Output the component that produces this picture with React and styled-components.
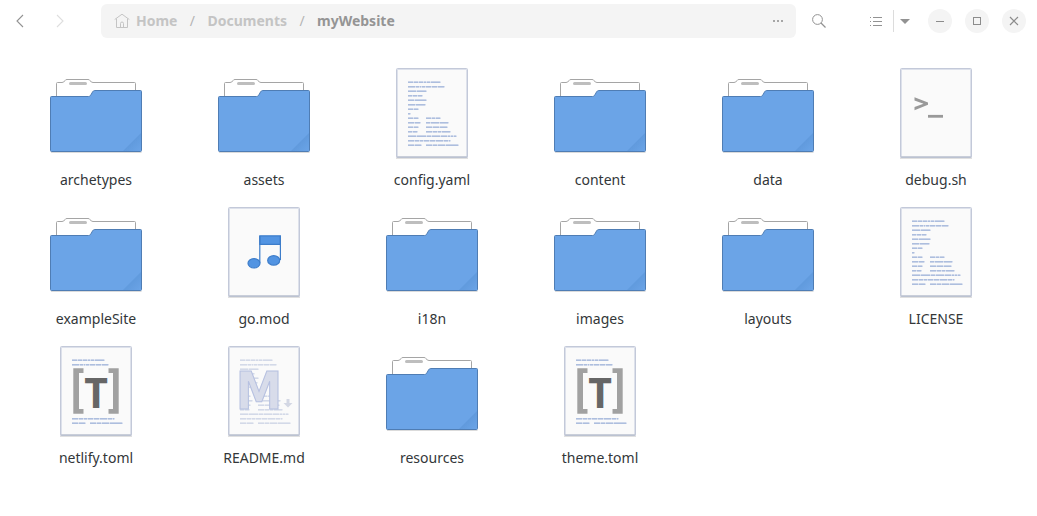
import React from "react";
import styled, { createGlobalStyle } from "styled-components";

const GlobalStyle = createGlobalStyle`
  * { box-sizing: border-box; }
  body {
    margin: 0;
    background: #fff;
    color: #333739;
    font: 14px/20px "Noto Sans", "Open Sans", sans-serif;
  }
  button { font: inherit; color: inherit; border: 0; padding: 0; background: none; }
  svg { display: block; }
`;

const Window = styled.div`
  min-height: 100vh;
`;

const HeaderBar = styled.header`
  display: flex;
  align-items: center;
  height: 42px;
  padding-right: 11px;
`;

const History = styled.nav`
  display: flex;
  padding: 0 22px 0 0;
`;

const IconButton = styled.button`
  display: flex;
  align-items: center;
  justify-content: center;
  width: ${(p) => p.$width || 40}px;
  height: 34px;
  color: ${(p) => (p.disabled ? "#dedede" : "#929292")};
`;

const PathBar = styled.nav`
  display: flex;
  align-items: center;
  flex: 1;
  min-width: 0;
  height: 34px;
  padding: 0 4px 0 13px;
  border-radius: 6px;
  background: #f4f4f4;
`;

const Crumbs = styled.ol`
  display: flex;
  align-items: center;
  flex: 1;
  margin: 0;
  padding: 0;
  list-style: none;
`;

const Crumb = styled.li`
  display: flex;
  align-items: center;

  & + &::before {
    content: "/";
    width: 30px;
    text-align: center;
    color: #b4b4b4;
  }
`;

const CrumbLink = styled.a`
  display: flex;
  align-items: center;
  gap: 6px;
  font-weight: 700;
  text-decoration: none;
  color: ${(p) => (p["aria-current"] ? "#959595" : "#c4c4c4")};
`;

const ViewSwitch = styled.div`
  display: flex;
  align-items: center;
  margin-left: 17px;
`;

const Divider = styled.span`
  width: 1px;
  height: 22px;
  background: #dcdcdc;
`;

const WindowControls = styled.div`
  display: flex;
  gap: 13px;
  margin-left: 12px;
`;

const RoundButton = styled.button`
  display: flex;
  align-items: center;
  justify-content: center;
  width: 24px;
  height: 24px;
  border-radius: 50%;
  background: #f4f4f4 !important;
  color: #8c8c8c !important;
`;

const FileGrid = styled.ul`
  display: grid;
  grid-template-columns: repeat(auto-fill, 168px);
  grid-auto-rows: 139px;
  margin: 0;
  padding: 23px 12px;
  list-style: none;
`;

const FileItem = styled.li`
  display: flex;
  justify-content: center;
`;

const FileButton = styled.button`
  display: flex;
  flex-direction: column;
  align-items: center;
  gap: 9px;
  height: 125px;
`;

const Glyph = ({ size = 16, children }) => (
  <svg width={size} height={size} viewBox={`0 0 ${size} ${size}`} fill="none" stroke="currentColor" aria-hidden="true">
    {children}
  </svg>
);

const FolderIcon = () => (
  <svg width="96" height="96" viewBox="0 0 96 96" aria-hidden="true">
    <path d="M3 87.500H93.500" stroke="#000" strokeOpacity=".14" strokeWidth="1" />
    <path
      d="M8.500 34V18.500q0-1 1-1H14q2 0 3-2 .5-1 2-1H40q1.500 0 2 1 1 2 3 2H86.500q1 0 1 1V34Z"
      fill="#fff"
      stroke="#a5a5a5"
    />
    <rect x="21" y="17" width="18" height="3" rx="1.500" fill="#bebebe" />
    <path
      d="M2.500 32.500q0-1 1-1H40.500q1.500 0 2.200-1.300L44.500 27q.8-1.500 2.300-1.500H92.500q1 0 1 1V85.500q0 1-1 1H3.500q-1 0-1-1Z"
      fill="#6ba4e7"
      stroke="#4f7db4"
    />
    <defs>
      <linearGradient id="fold" x1="0" y1="0" x2="1" y2="1">
        <stop offset=".45" stopColor="#5f99dc" />
        <stop offset="1" stopColor="#6ba4e7" />
      </linearGradient>
    </defs>
    <path d="M75 86 93 68V85q0 1-1 1Z" fill="url(#fold)" />
  </svg>
);

const Page = ({ children }) => (
  <svg width="96" height="96" viewBox="0 0 96 96" aria-hidden="true">
    <path d="M12 93.500H84" stroke="#000" strokeOpacity=".12" />
    <rect x="12.500" y="3.500" width="71" height="89" rx="1" fill="#fafafa" stroke="#c3c9d9" />
    <path d="M13.500 4.500V91.500M82.500 4.500V91.500M13 4.500H83" stroke="#dde1eb" />
    <path d="M12.500 92H83.500" stroke="#b9bfce" strokeWidth="1.500" />
    {children}
  </svg>
);

/* Each row of the sheet holds [start, end] runs, measured from the text margin. */
const SHEET = [
  [[0, 5], [6, 10], [11, 15], [16, 18], [19, 22], [23, 32]],
  [[0, 7], [8, 11], [12, 13], [14, 17], [18, 23], [24, 29], [30, 36]],
  [[0, 8], [9, 18]],
  [[0, 4], [5, 9], [10, 14]],
  [[0, 6], [7, 18]],
  [[0, 7], [8, 17]],
  [[0, 5], [6, 10]],
  [[0, 2]],
  [[0, 5], [6, 10], [18, 23], [24, 27], [28, 32]],
  [[0, 6], [7, 12], [18, 22], [23, 31], [32, 40]],
  [[0, 5], [6, 10], [18, 24], [25, 31], [32, 39]],
  [[0, 4], [5, 9], [18, 24], [25, 29], [30, 33], [34, 42]],
  [[0, 8], [9, 18], [19, 23], [24, 32], [33, 39], [40, 42], [43, 45], [46, 48]],
  [[0, 6], [7, 11], [12, 15], [16, 21], [22, 27], [28, 35], [36, 40], [41, 42]],
  [[0, 6], [7, 13], [18, 24], [25, 29], [30, 37], [38, 50]],
];

const sheetPath = (rows, gap) =>
  rows
    .map((r) => SHEET[r].map(([a, b]) => `M${24 + a} ${17.2 + r * 4.5}H${24 + b + gap}`).join(""))
    .join("");

const SheetLines = ({ rows, faint }) => (
  <g strokeWidth="1.600">
    <path d={sheetPath(rows, 1)} stroke={faint ? "#e6e9f1" : "#d5ddee"} />
    <path d={sheetPath(rows, 0)} stroke={faint ? "#d3d9e8" : "#adbede"} />
  </g>
);

const ALL_ROWS = SHEET.map((_, i) => i);

const TextIcon = () => (
  <Page>
    <SheetLines rows={ALL_ROWS} />
  </Page>
);

const ScriptIcon = () => (
  <Page>
    <path d="M26.500 32.300V35.500L35.500 38.700 26.500 42V45.200L40 39.800V37.600Z" fill="#999" />
    <path d="M40 51.300H55" stroke="#999" strokeWidth="2.800" />
  </Page>
);

const AudioIcon = () => (
  <Page>
    <g fill="#5294e2" stroke="#3d7dca" strokeWidth="1.200">
      <path d="M43.800 31.800H64.400V40.300H43.800Z" />
      <path d="M43.800 32V59M64.400 32V56" />
      <ellipse cx="38" cy="59.300" rx="6" ry="4.700" />
      <ellipse cx="57.700" cy="56.400" rx="6" ry="4.700" />
    </g>
  </Page>
);

const TomlIcon = () => (
  <Page>
    <SheetLines rows={[0, 1, 13, 14]} />
    <path
      d="M25.300 25.300H35.500V30H31V66H35.500V70.700H25.300ZM70.700 25.300H60.500V30H65V66H60.500V70.700H70.700Z"
      fill="#a1a1a1"
    />
    <text x="48" y="65" textAnchor="middle" fontFamily="Noto Sans, sans-serif" fontWeight="700" fontSize="41" fill="#666">
      T
    </text>
  </Page>
);

const MarkdownIcon = () => (
  <Page>
    <SheetLines rows={ALL_ROWS} faint />
    <text
      x="43"
      y="66"
      textAnchor="middle"
      fontFamily="DejaVu Sans Condensed, DejaVu Sans, sans-serif"
      fontWeight="700"
      fontSize="52"
      fill="#d8dcea"
      stroke="#b6c0e0"
    >
      M
    </text>
    <path d="M70.500 56H73.500V60H76.500L72 64.500 67.500 60H70.500Z" fill="#d3d7e4" />
  </Page>
);

const ICONS = {
  folder: FolderIcon,
  text: TextIcon,
  script: ScriptIcon,
  audio: AudioIcon,
  toml: TomlIcon,
  markdown: MarkdownIcon,
};

const FILES = [
  ["archetypes", "folder"],
  ["assets", "folder"],
  ["config.yaml", "text"],
  ["content", "folder"],
  ["data", "folder"],
  ["debug.sh", "script"],
  ["exampleSite", "folder"],
  ["go.mod", "audio"],
  ["i18n", "folder"],
  ["images", "folder"],
  ["layouts", "folder"],
  ["LICENSE", "text"],
  ["netlify.toml", "toml"],
  ["README.md", "markdown"],
  ["resources", "folder"],
  ["theme.toml", "toml"],
];

export default function App() {
  return (
    <Window>
      <GlobalStyle />
      <HeaderBar>
        <History aria-label="History">
          <IconButton aria-label="Back">
            <Glyph><path d="M11 2 5 8 11 14" strokeWidth="1.100" /></Glyph>
          </IconButton>
          <IconButton $width={39} aria-label="Forward" disabled>
            <Glyph><path d="M5 2 11 8 5 14" strokeWidth="1.100" /></Glyph>
          </IconButton>
        </History>
        <PathBar aria-label="Location">
          <Crumbs>
            <Crumb>
              <CrumbLink href="#home">
                <Glyph>
                  <path d="M.7 6.500 8 1.200 15.300 6.500M2.500 5.500V14.500H13.500V5.500M6.500 14.500V10.500q0-1.500 1.500-1.500t1.500 1.500V14.500" />
                </Glyph>
                Home
              </CrumbLink>
            </Crumb>
            <Crumb><CrumbLink href="#documents">Documents</CrumbLink></Crumb>
            <Crumb><CrumbLink href="#mywebsite" aria-current="page">myWebsite</CrumbLink></Crumb>
          </Crumbs>
          <IconButton $width={28} aria-label="More options">
            <Glyph><path d="M3 8H5M7 8H9M11 8H13" strokeWidth="2" opacity=".8" /></Glyph>
          </IconButton>
        </PathBar>
        <IconButton $width={46} aria-label="Search">
          <Glyph>
            <circle cx="6.500" cy="6.500" r="4.900" />
            <path d="M10 10 14.500 14.500" strokeWidth="1.300" />
          </Glyph>
        </IconButton>
        <ViewSwitch>
          <IconButton $width={34} aria-label="List view">
            <Glyph>
              <path d="M2 4.500H3M5 4.500H14M2 8.500H3M5 8.500H14M2 12.500H3M5 12.500H14" />
            </Glyph>
          </IconButton>
          <Divider />
          <IconButton $width={22} aria-label="View options">
            <Glyph><path d="M3 6H13L8 11Z" fill="currentColor" stroke="none" /></Glyph>
          </IconButton>
        </ViewSwitch>
        <WindowControls>
          <RoundButton aria-label="Minimize">
            <Glyph><path d="M4 8.500H12" /></Glyph>
          </RoundButton>
          <RoundButton aria-label="Maximize">
            <Glyph><rect x="4.500" y="4.500" width="7" height="7" /></Glyph>
          </RoundButton>
          <RoundButton aria-label="Close">
            <Glyph><path d="M4 4 12 12M12 4 4 12" strokeWidth="1.200" /></Glyph>
          </RoundButton>
        </WindowControls>
      </HeaderBar>
      <main>
        <FileGrid>
          {FILES.map(([name, kind]) => {
            const Icon = ICONS[kind];
            return (
              <FileItem key={name}>
                <FileButton>
                  <Icon />
                  {name}
                </FileButton>
              </FileItem>
            );
          })}
        </FileGrid>
      </main>
    </Window>
  );
}
